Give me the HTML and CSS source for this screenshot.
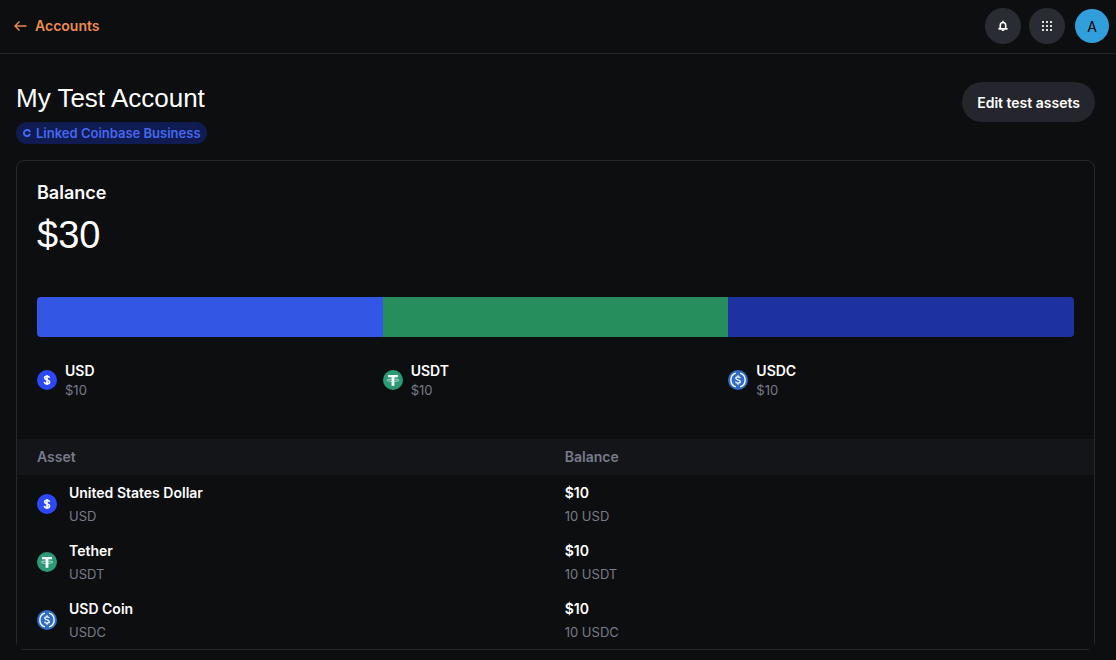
FILE: index.html
```html
<!DOCTYPE html>
<html lang="en">
<head>
    <meta charset="UTF-8">
    <meta name="viewport" content="width=device-width, initial-scale=1.0">
    <title>My Test Account</title>
    <link rel="stylesheet" href="styles.css">
</head>
<body>
    <!-- Coin icons, reused in the legend and the table -->
    <svg class="sprite" aria-hidden="true">
        <symbol id="icon-usd" viewBox="0 0 20 20">
            <circle cx="10" cy="10" r="10" fill="#2c48fa"/>
            <path d="M12.5 7.9C12.3 6.8 11.3 6.2 10 6.2c-1.400 0-2.400.7-2.400 1.800 0 2.500 5 1.300 5 3.900 0 1.200-1.100 1.900-2.600 1.900s-2.500-.7-2.700-1.900M10 5v10" fill="none" stroke="#fff" stroke-width="1.600"/>
        </symbol>
        <symbol id="icon-usdt" viewBox="0 0 20 20">
            <circle cx="10" cy="10" r="10" fill="#2b9a75"/>
            <path d="M5.100 4.900h9.800v2.300h-3.500v8.600H8.600V7.200H5.100z" fill="#fff"/>
            <path d="M8.600 9.100c-2.600.1-4.400.5-4.400 1.100s2.500 1.200 5.800 1.200 5.800-.6 5.800-1.200-1.800-1-4.400-1.100" fill="none" stroke="#fff" stroke-width=".6"/>
        </symbol>
        <symbol id="icon-usdc" viewBox="0 0 20 20">
            <circle cx="10" cy="10" r="10" fill="#2f6bc8"/>
            <path d="M7.900 3.200a7.100 7.100 0 0 0 0 13.600M12.100 3.200a7.100 7.100 0 0 1 0 13.600" fill="none" stroke="#fff" stroke-width="1.400"/>
            <path d="M12.200 8.200C12 7.300 11.200 6.800 10 6.800c-1.300 0-2.200.6-2.200 1.500 0 2.100 4.500 1.100 4.500 3.300 0 1-.9 1.600-2.300 1.600s-2.200-.5-2.400-1.500M10 5.300v1.500M10 13.200v1.500" fill="none" stroke="#fff" stroke-width="1.300"/>
        </symbol>
    </svg>

    <header class="topbar">
        <a href="#" class="back-link">
            <svg width="13" height="12" viewBox="0 0 13 12" aria-hidden="true">
                <path d="M12.500 6H1.500M5.500 1.500L1 6l4.500 4.500" fill="none" stroke="currentColor" stroke-width="1.400"/>
            </svg>
            Accounts
        </a>
        <div class="topbar-actions">
            <button class="icon-button" aria-label="Notifications">
                <svg width="12" height="12" viewBox="0 0 12 12" aria-hidden="true">
                    <path d="M6 .8v1.400M3.300 8V5.200a2.700 2.700 0 0 1 5.400 0V8L10.400 8.900H1.600z" fill="none" stroke="#fff" stroke-width="1.600"/>
                    <path d="M4.400 9.400h3.200a1.600 1.600 0 0 1-3.200 0z" fill="#fff"/>
                </svg>
            </button>
            <button class="icon-button" aria-label="Apps">
                <svg width="10" height="10" viewBox="0 0 10 10" fill="#dedfe2" aria-hidden="true">
                    <path d="M0 0h2v2H0zM4 0h2v2H4zM8 0h2v2H8zM0 4h2v2H0zM4 4h2v2H4zM8 4h2v2H8zM0 8h2v2H0zM4 8h2v2H4zM8 8h2v2H8z"/>
                </svg>
            </button>
            <button class="avatar" aria-label="Account A">A</button>
        </div>
    </header>

    <main class="page">
        <div class="page-head">
            <div class="page-title">
                <h1>My Test Account</h1>
                <span class="badge">
                    <svg width="8" height="8" viewBox="0 0 8 8" aria-hidden="true">
                        <path d="M7 3.100a3.100 3.100 0 1 0 0 1.800" fill="none" stroke="currentColor" stroke-width="2"/>
                    </svg>
                    Linked Coinbase Business
                </span>
            </div>
            <button class="edit-button">Edit test assets</button>
        </div>

        <section class="card">
            <div class="balance">
                <h2>Balance</h2>
                <p class="total">$30</p>
                <div class="bar">
                    <div class="bar-usd"></div>
                    <div class="bar-usdt"></div>
                    <div class="bar-usdc"></div>
                </div>
                <ul class="legend">
                    <li>
                        <svg class="coin"><use href="#icon-usd"/></svg>
                        <div>
                            <p class="legend-name">USD</p>
                            <p class="legend-value">$10</p>
                        </div>
                    </li>
                    <li>
                        <svg class="coin"><use href="#icon-usdt"/></svg>
                        <div>
                            <p class="legend-name">USDT</p>
                            <p class="legend-value">$10</p>
                        </div>
                    </li>
                    <li>
                        <svg class="coin"><use href="#icon-usdc"/></svg>
                        <div>
                            <p class="legend-name">USDC</p>
                            <p class="legend-value">$10</p>
                        </div>
                    </li>
                </ul>
            </div>

            <table class="assets">
                <thead>
                    <tr>
                        <th class="col-asset">Asset</th>
                        <th>Balance</th>
                    </tr>
                </thead>
                <tbody>
                    <tr>
                        <td>
                            <div class="asset">
                                <svg class="coin"><use href="#icon-usd"/></svg>
                                <div>
                                    <p class="main-text">United States Dollar</p>
                                    <p class="sub-text">USD</p>
                                </div>
                            </div>
                        </td>
                        <td>
                            <p class="main-text">$10</p>
                            <p class="sub-text">10 USD</p>
                        </td>
                    </tr>
                    <tr>
                        <td>
                            <div class="asset">
                                <svg class="coin"><use href="#icon-usdt"/></svg>
                                <div>
                                    <p class="main-text">Tether</p>
                                    <p class="sub-text">USDT</p>
                                </div>
                            </div>
                        </td>
                        <td>
                            <p class="main-text">$10</p>
                            <p class="sub-text">10 USDT</p>
                        </td>
                    </tr>
                    <tr>
                        <td>
                            <div class="asset">
                                <svg class="coin"><use href="#icon-usdc"/></svg>
                                <div>
                                    <p class="main-text">USD Coin</p>
                                    <p class="sub-text">USDC</p>
                                </div>
                            </div>
                        </td>
                        <td>
                            <p class="main-text">$10</p>
                            <p class="sub-text">10 USDC</p>
                        </td>
                    </tr>
                </tbody>
            </table>
        </section>
    </main>
</body>
</html>
```
FILE: styles.css
```css
* {
    box-sizing: border-box;
}
body {
    margin: 0;
    background-color: #0d0e10;
    color: #fff;
    font-family: Inter, "Liberation Sans", sans-serif;
    font-size: 14px;
}
h1, h2, p, ul {
    margin: 0;
    padding: 0;
}
button {
    border: none;
    padding: 0;
    font-family: inherit;
    cursor: pointer;
}
.sprite {
    display: none;
}

/* Top bar */
.topbar {
    display: flex;
    justify-content: space-between;
    align-items: center;
    padding: 8px 7px 9px 14px;
    border-bottom: 1px solid #27282c;
}
.back-link {
    display: flex;
    align-items: center;
    gap: 8px;
    color: #ec8b50;
    line-height: 20px;
    font-weight: 600;
    text-decoration: none;
}
.topbar-actions {
    display: flex;
    align-items: center;
    gap: 8px;
}
.icon-button {
    display: flex;
    align-items: center;
    justify-content: center;
    width: 36px;
    height: 36px;
    border-radius: 50%;
    background-color: #2a2c34;
}
.avatar {
    width: 34px;
    height: 34px;
    margin-left: 2px;
    border-radius: 50%;
    background-color: #309fdb;
    color: #000;
    font-size: 14px;
}

/* Page heading */
.page {
    padding: 28px 21px 10px 16px;
}
.page-head {
    display: flex;
    justify-content: space-between;
    align-items: flex-start;
    margin-bottom: 16px;
}
.page-title {
    display: flex;
    flex-direction: column;
    align-items: flex-start;
    gap: 8px;
}
h1, .total {
    font-family: "Liberation Sans", Arial, sans-serif;
    font-weight: 400;
}
h1 {
    font-size: 26px;
    line-height: 32px;
}
.badge {
    display: flex;
    align-items: center;
    gap: 5px;
    padding: 0 6px 0 7px;
    border-radius: 11px;
    background-color: #101b51;
    color: #4568ee;
    font-size: 13px;
    line-height: 22px;
    font-weight: 600;
}
.edit-button {
    height: 40px;
    padding: 0 15px;
    border-radius: 20px;
    background-color: #25262d;
    color: #fff;
    font-size: 14px;
    font-weight: 600;
}

/* Balance card */
.card {
    border: 1px solid #27282c;
    border-radius: 8px;
}
.balance {
    padding: 20px 20px 40px;
}
h2 {
    font-size: 18px;
    line-height: 24px;
    font-weight: 600;
}
.total {
    margin-top: 6px;
    font-size: 38px;
    line-height: 48px;
}
.bar {
    display: flex;
    height: 40px;
    margin-top: 38px;
    border-radius: 4px;
    overflow: hidden;
}
.bar div {
    flex: 1;
}
.bar-usd {
    background-color: #3356e4;
}
.bar-usdt {
    background-color: #258e5c;
}
.bar-usdc {
    background-color: #1e31a1;
}
.legend {
    display: flex;
    margin-top: 24px;
    list-style: none;
}
.legend li {
    display: flex;
    flex: 1;
    align-items: center;
    gap: 8px;
}
.coin {
    flex: none;
    width: 20px;
    height: 20px;
}
.legend-name {
    line-height: 20px;
    font-weight: 600;
}
.legend-value {
    color: #787b89;
    font-size: 13px;
    line-height: 18px;
}

/* Assets table */
.assets {
    width: 100%;
    border-collapse: collapse;
    table-layout: fixed;
    background-color: #0d0e10;
}
.assets th {
    padding: 0 20px;
    background-color: #141519;
    color: #787b89;
    line-height: 36px;
    font-weight: 600;
    text-align: left;
}
.assets .col-asset {
    width: 49%;
}
.assets td {
    padding: 6px 20px;
}
.asset {
    display: flex;
    align-items: center;
    gap: 12px;
}
.main-text {
    line-height: 24px;
    font-weight: 600;
}
.sub-text {
    color: #787b89;
    font-size: 13px;
    line-height: 22px;
}
```
